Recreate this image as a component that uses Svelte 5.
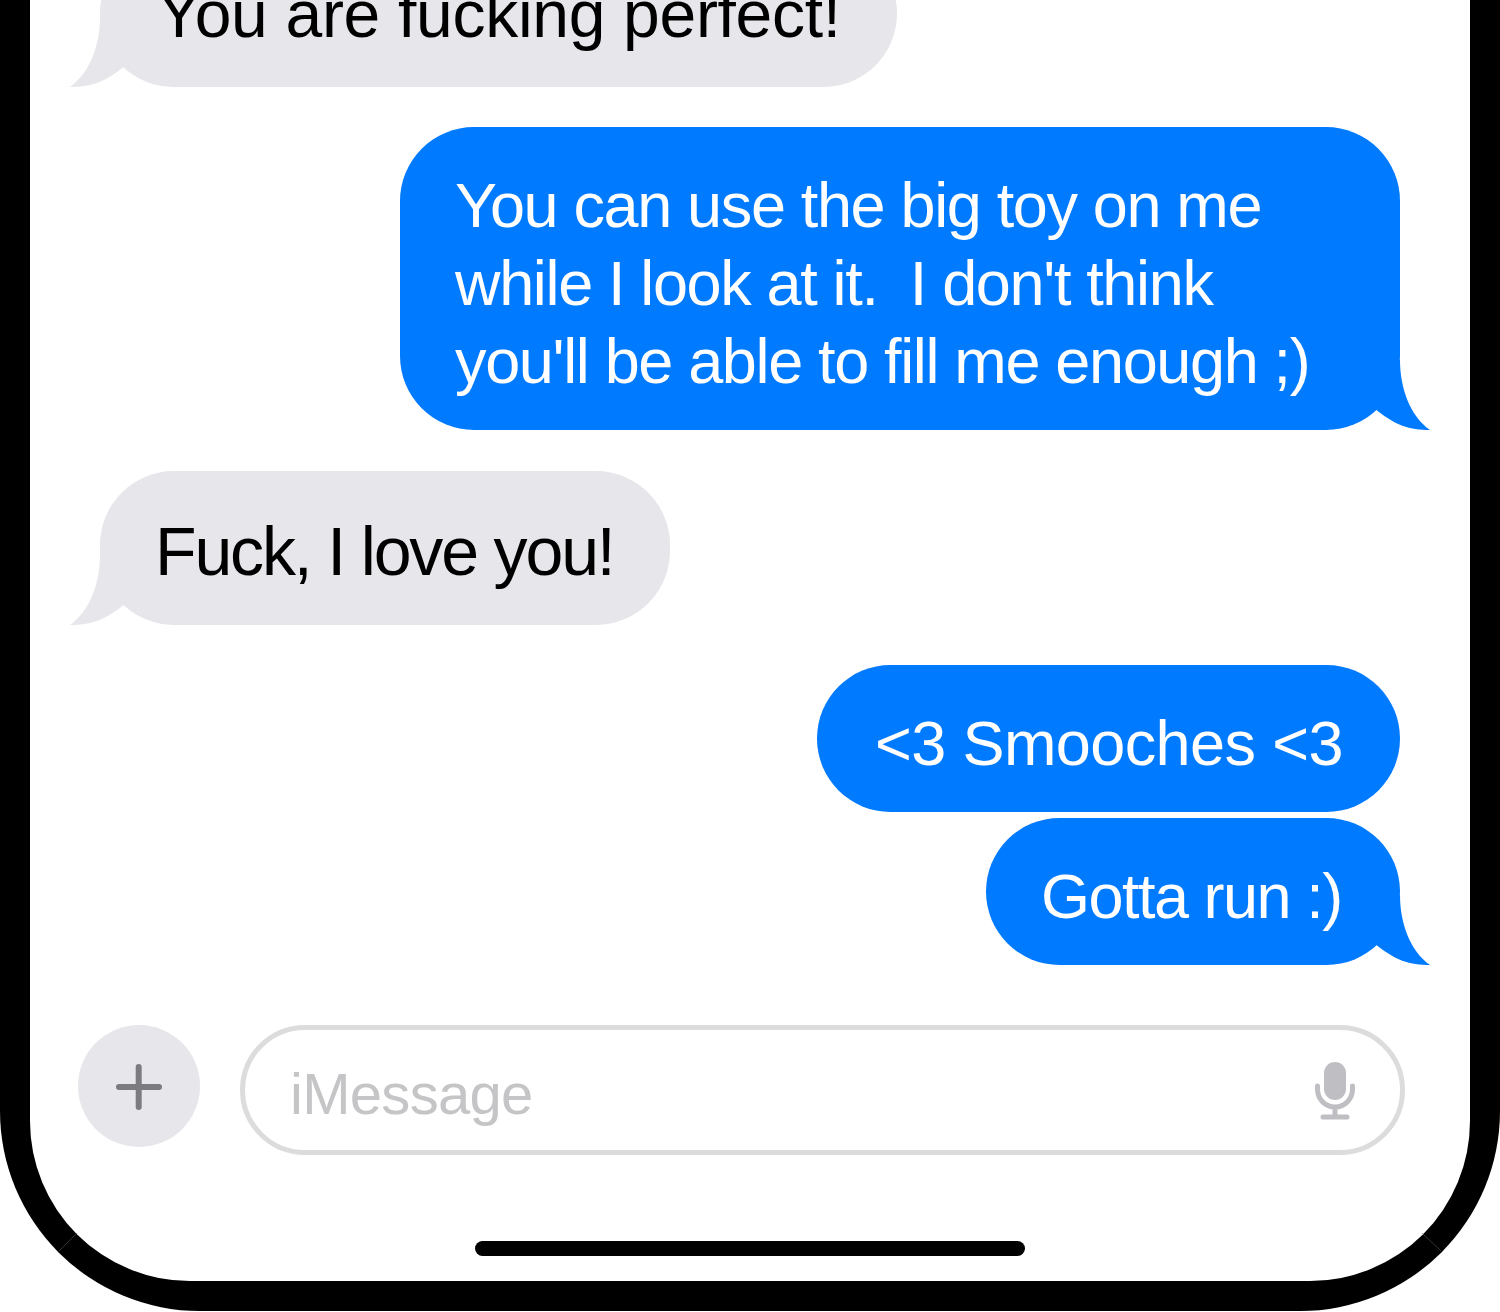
<script>
  const tailPath = 'M30 0 C30 28 40 56 60 70 C40 70 25 66 3 47 L0 47 L0 0 Z';
</script>

<div class="phone">
  <div class="screen">
    <div class="thread">
      <div class="bubble in first">
        <span class="text">You are fucking perfect!</span>
        <svg class="tail tail-in" viewBox="0 0 60 70" aria-hidden="true"><path d={tailPath} /></svg>
      </div>
      <div class="bubble out long">
        <span class="text">You can use the big toy on me<br />while I look at it.&nbsp; I don't think<br />you'll be able to fill me enough ;)</span>
        <svg class="tail tail-out" viewBox="0 0 60 70" aria-hidden="true"><path d={tailPath} /></svg>
      </div>
      <div class="bubble in love">
        <span class="text">Fuck, I love you!</span>
        <svg class="tail tail-in" viewBox="0 0 60 70" aria-hidden="true"><path d={tailPath} /></svg>
      </div>
      <div class="bubble out smooch">
        <span class="text">&lt;3 Smooches &lt;3</span>
      </div>
      <div class="bubble out tight">
        <span class="text">Gotta run :)</span>
        <svg class="tail tail-out" viewBox="0 0 60 70" aria-hidden="true"><path d={tailPath} /></svg>
      </div>
    </div>

    <div class="composer">
      <div class="plus">
        <svg viewBox="0 0 48 48" width="48" height="48" aria-hidden="true">
          <path d="M23.700 5V45M4 25H44" stroke="#7b7b80" stroke-width="6" stroke-linecap="round" fill="none" />
        </svg>
      </div>
      <div class="field">
        <span class="placeholder">iMessage</span>
        <svg class="mic" viewBox="0 0 40 58" width="40" height="58" aria-hidden="true">
          <rect x="9" y="0" width="22" height="38" rx="11" fill="#bebec3" />
          <path d="M2.500 24V27C2.500 37 10 45 20 45C30 45 37.500 37 37.500 27V24M20 45V54M8 55H32" stroke="#bebec3" stroke-width="5" stroke-linecap="round" fill="none" />
        </svg>
      </div>
    </div>

    <div class="home"></div>
  </div>
  <svg class="seams" viewBox="0 0 1500 1311" aria-hidden="true">
    <path d="M59 1251L77 1233M1441 1251L1422 1233" stroke="#555" stroke-width="0.6" fill="none" />
  </svg>
</div>

<style>
  :global(body) {
    margin: 0;
    background: #fff;
  }

  .phone {
    position: relative;
    width: 1500px;
    height: 1311px;
    box-sizing: border-box;
    background: #000;
    padding: 0 30px 30px;
    border-radius: 0 0 200px 200px;
    overflow: hidden;
  }

  .seams {
    position: absolute;
    inset: 0;
    width: 1500px;
    height: 1311px;
    pointer-events: none;
  }

  .screen {
    height: 1281px;
    background: #fff;
    border-radius: 0 0 160px 160px;
    overflow: hidden;
    display: flex;
    flex-direction: column;
  }

  .thread {
    display: flex;
    flex-direction: column;
    padding: 0 70px;
    margin-top: -60px;
    font-family: "Liberation Sans", Arial, sans-serif;
    font-size: 63px;
    line-height: 78px;
    letter-spacing: -1.35px;
  }

  .bubble {
    position: relative;
    box-sizing: border-box;
    padding: 39px 57px 30px;
    border-radius: 74px;
    white-space: nowrap;
    width: fit-content;
  }

  .bubble.in {
    background: #e6e6eb;
    color: #000;
  }

  .bubble.out {
    background: #007aff;
    color: #fff;
    align-self: flex-end;
    margin-top: 40px;
  }

  .first {
    width: 797px;
    padding-top: 35px;
    padding-bottom: 34px;
    padding-left: 57px;
    font-size: 66px;
    letter-spacing: -0.3px;
  }

  .long {
    width: 1000px;
    padding-left: 55px;
  }

  .love {
    width: 570px;
    margin-top: 41px;
    padding-top: 41px;
    padding-bottom: 35px;
    padding-left: 55px;
    font-size: 68px;
    letter-spacing: -2.15px;
  }

  .bubble.smooch {
    width: 583px;
    padding-left: 58px;
    letter-spacing: -0.6px;
  }

  .bubble.tight {
    width: 414px;
    margin-top: 6px;
    padding-left: 55px;
    letter-spacing: -1.5px;
  }

  .tail {
    position: absolute;
    width: 60px;
    height: 70px;
    bottom: 0;
  }

  .bubble.in .tail {
    fill: #e6e6eb;
  }

  .bubble.out .tail {
    fill: #007aff;
  }

  .tail-out {
    right: -30px;
  }

  .tail-in {
    left: -30px;
    transform: scaleX(-1);
  }

  .composer {
    display: flex;
    align-items: flex-start;
    gap: 40px;
    padding-left: 48px;
    margin-top: 60px;
    font-family: "Liberation Sans", Arial, sans-serif;
  }

  .plus {
    width: 122px;
    height: 122px;
    border-radius: 50%;
    background: #e6e6eb;
    display: flex;
    align-items: center;
    justify-content: center;
    flex: none;
  }

  .field {
    width: 1165px;
    height: 130px;
    box-sizing: border-box;
    border: 5px solid #dcdcdc;
    border-radius: 65px;
    display: flex;
    align-items: center;
    justify-content: space-between;
    padding: 0 45px 0 45px;
    background: #fff;
  }

  .placeholder {
    font-size: 58px;
    letter-spacing: -0.7px;
    color: #c5c5c7;
    margin-top: 6px;
  }

  .mic {
    margin-top: 1px;
  }

  .home {
    width: 550px;
    height: 15px;
    border-radius: 8px;
    background: #000;
    align-self: center;
    margin-top: 86px;
  }
</style>
